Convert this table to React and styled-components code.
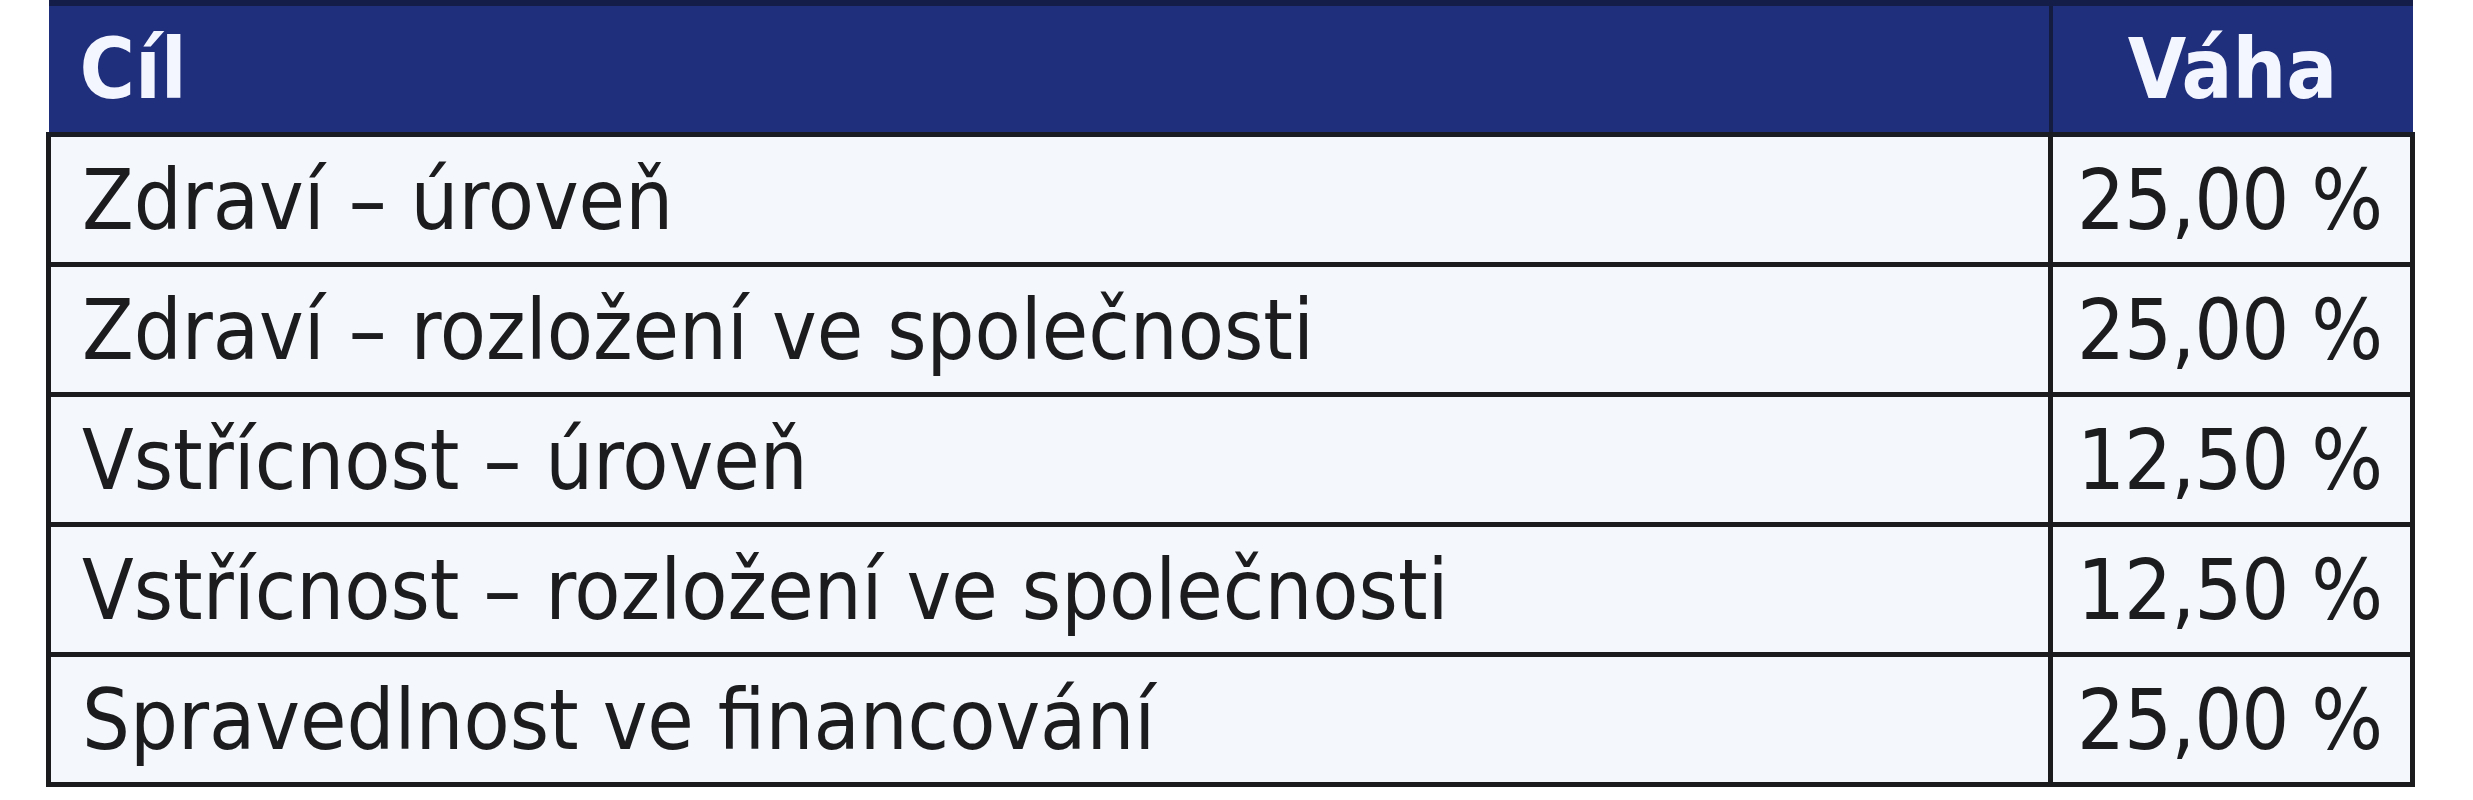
import styled, { createGlobalStyle } from "styled-components";

const GlobalStyle = createGlobalStyle`
    body {
        margin: 0;
        background: #ffffff;
    }
`
const Page = styled.div`
    padding: 0 58px 0 46px;
    width: 2473px;
    box-sizing: border-box;
`
const Table = styled.table`
    width: 100%;
    table-layout: fixed;
    border-collapse: collapse;
    font-family: "Liberation Sans Narrow", "DejaVu Sans Condensed", "Liberation Sans", sans-serif;
    font-size: 84px;
    color: #1c1c1e;
`
const HeadRow = styled.tr`
    background: #202f7c;
    border-top: 6px solid #141c48;
`
const HeadCell = styled.th`
    height: 126px;
    padding: 0 31px;
    font-weight: 700;
    color: #f4f6ff;
    text-align: ${(p) => (p.$center ? "center" : "left")};
    width: ${(p) => (p.$center ? "298px" : "auto")};
    border-left: ${(p) => (p.$center ? "4px solid #141c40" : "none")};
    border-bottom: 5px solid #1a1c24;
`
const Row = styled.tr`
    background: #f4f8fc;
`
const Cell = styled.td`
    height: 125px;
    padding: 0 ${(p) => (p.$right ? "33px" : "31px")} 0 ${(p) => (p.$right ? "24px" : "31px")};
    border: 5px solid #1b1b1d;
    text-align: ${(p) => (p.$right ? "right" : "left")};
    letter-spacing: ${(p) => (p.$right ? "-1px" : "0")};
    white-space: nowrap;
`

const rows = [
    ["Zdraví – úroveň", "25,00 %"],
    ["Zdraví – rozložení ve společnosti", "25,00 %"],
    ["Vstřícnost – úroveň", "12,50 %"],
    ["Vstřícnost – rozložení ve společnosti", "12,50 %"],
    ["Spravedlnost ve financování", "25,00 %"],
]

const App = () => {
    return (
        <Page>
            <GlobalStyle />
            <Table>
                <thead>
                    <HeadRow>
                        <HeadCell>Cíl</HeadCell>
                        <HeadCell $center>Váha</HeadCell>
                    </HeadRow>
                </thead>
                <tbody>
                    {rows.map(([goal, weight]) => (
                        <Row key={goal}>
                            <Cell>{goal}</Cell>
                            <Cell $right>{weight}</Cell>
                        </Row>
                    ))}
                </tbody>
            </Table>
        </Page>
    )
}

export default App
